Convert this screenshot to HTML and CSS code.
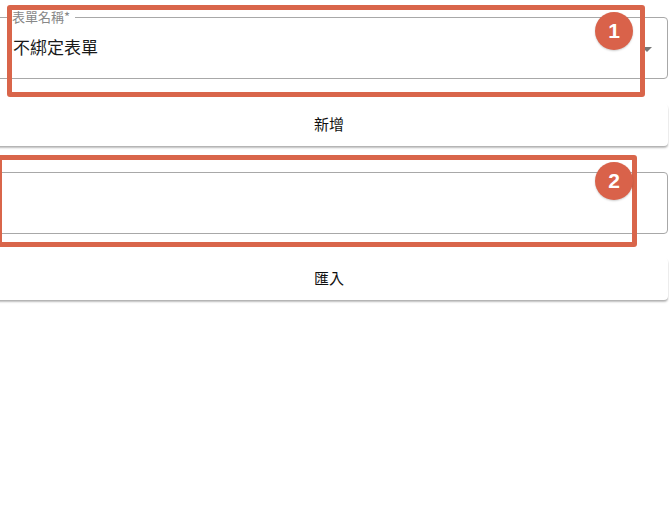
FILE: index.html
```html
<!DOCTYPE html>
<html lang="zh-Hant">
<head>
    <meta charset="UTF-8">
    <meta name="viewport" content="width=device-width, initial-scale=1.0">
    <title>表單設定</title>
    <link rel="stylesheet" href="styles.css">
</head>
<body>

    <div class="form">
        <div class="field">
            <fieldset class="outline">
                <legend>表單名稱*</legend>
            </fieldset>
            <div class="value">不綁定表單</div>
            <span class="arrow"></span>
        </div>

        <button class="btn btn-add">新增</button>

        <div class="field field-empty">
            <fieldset class="outline"></fieldset>
        </div>

        <button class="btn btn-import">匯入</button>
    </div>

    <div class="mark mark-1"></div>
    <div class="badge badge-1">1</div>

    <div class="mark mark-2"></div>
    <div class="badge badge-2">2</div>

</body>
</html>
```

FILE: styles.css
```css
body {
    margin: 0;
    background-color: #fff;
    font-family: "Noto Sans CJK TC", "Noto Sans", Arial, sans-serif;
    color: #111;
    width: 669px;
    height: 520px;
    overflow: hidden;
    position: relative;
}

.form {
    margin-left: -10px;
    width: 678px;
    padding-top: 11px;
    display: flex;
    flex-direction: column;
}

.field {
    position: relative;
    height: 68px;
}

.outline {
    position: absolute;
    left: 0;
    right: 0;
    top: 0;
    bottom: 0;
    margin: 0;
    padding: 0 8px;
    border: 1px solid #a8a8a8;
    border-radius: 4px;
}

.outline legend {
    margin-left: 8px;
    padding: 0 5px 0 5px;
    font-size: 13px;
    line-height: 12px;
    color: #888;
}

.field-empty .outline {
    top: 6px;
}

.value {
    position: absolute;
    left: 23px;
    top: 25px;
    font-size: 17px;
    line-height: 22px;
    color: #1a1a1a;
}

.arrow {
    position: absolute;
    right: 16px;
    top: 36px;
    width: 0;
    height: 0;
    border-left: 5px solid transparent;
    border-right: 5px solid transparent;
    border-top: 5px solid #777;
}

.btn {
    height: 42px;
    border: none;
    border-radius: 4px;
    background-color: #fff;
    box-shadow: 0 1px 1px rgba(0, 0, 0, 0.08), 0 2px 2px rgba(0, 0, 0, 0.25);
    font-family: inherit;
    font-size: 15px;
    color: #111;
    padding: 0 0 3px 0;
}

.btn-add {
    margin-top: 25px;
    margin-bottom: 20px;
}

.btn-import {
    margin-top: 24px;
}

.mark {
    position: absolute;
    border: 5px solid #d9654a;
    border-radius: 3px;
}

.mark-1 {
    left: 7px;
    top: 5px;
    width: 628px;
    height: 82px;
}

.mark-2 {
    left: -3px;
    top: 155px;
    width: 630px;
    height: 82px;
}

.badge {
    position: absolute;
    width: 38px;
    height: 38px;
    border-radius: 50%;
    background-color: #d9624a;
    box-shadow: 0 1px 2px rgba(0, 0, 0, 0.2);
    color: #fff;
    font-family: "Liberation Sans", Arial, sans-serif;
    font-weight: bold;
    font-size: 21px;
    line-height: 38px;
    text-align: center;
}

.badge-1 {
    left: 595px;
    top: 12px;
}

.badge-2 {
    left: 595px;
    top: 162px;
}
```
